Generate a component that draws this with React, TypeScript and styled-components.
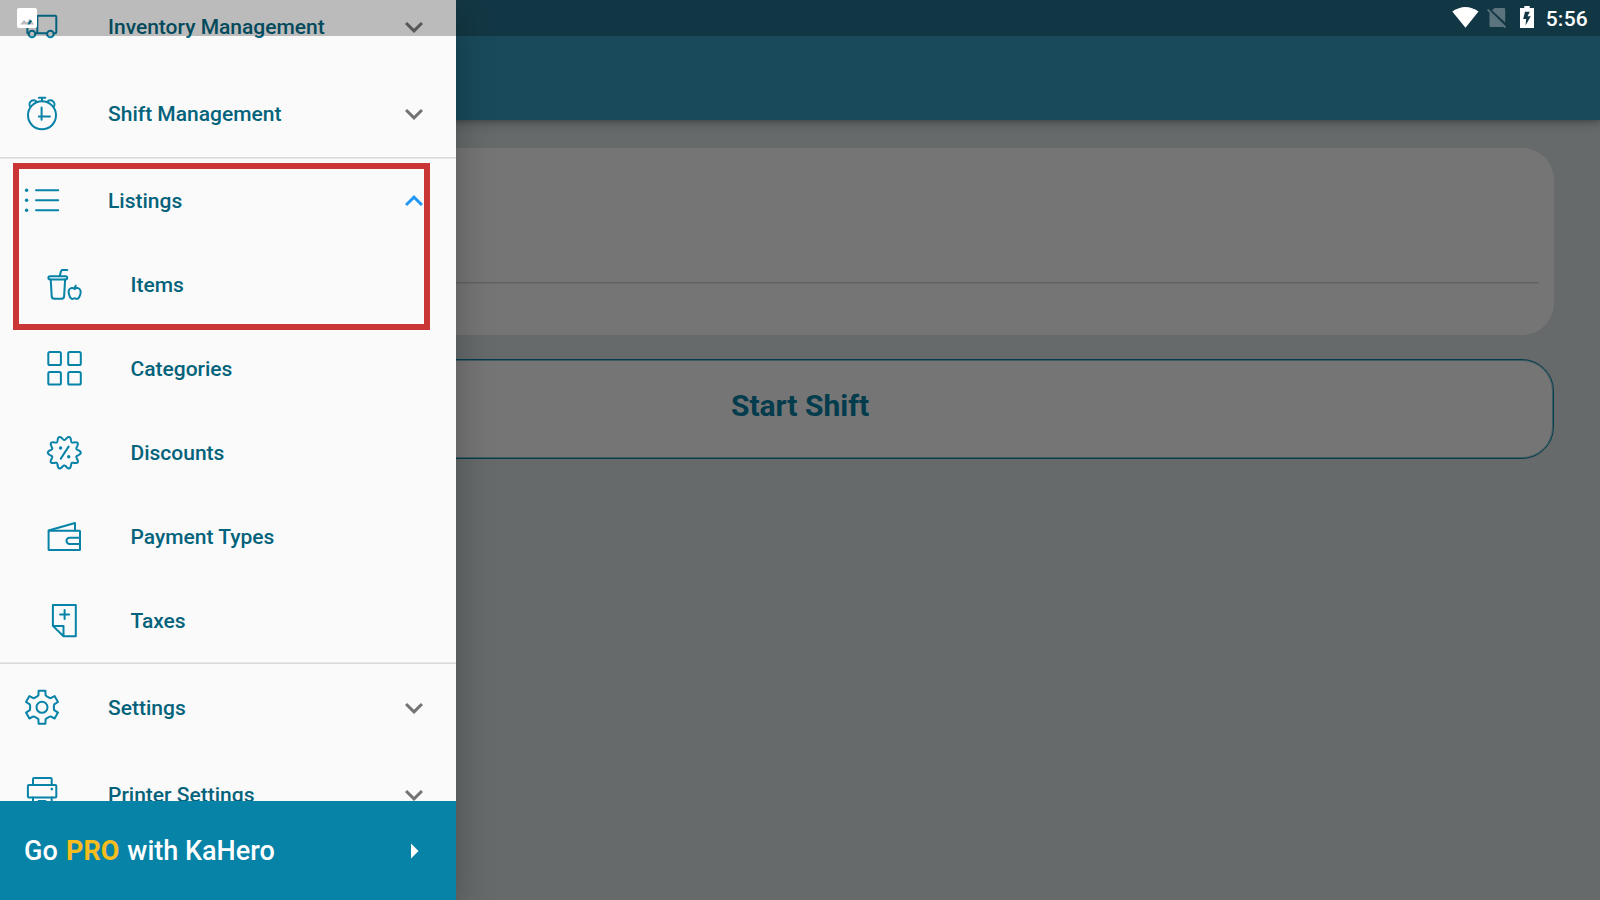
import React from 'react';
import styled, { createGlobalStyle } from 'styled-components';

const GlobalStyle = createGlobalStyle`
  * { box-sizing: border-box; }
  body { margin: 0; font-family: Roboto, sans-serif; }
`;

const Screen = styled.div`
  position: relative;
  width: 1600px;
  height: 900px;
  overflow: hidden;
  background: #dfe7e8;
`;

const Page = styled.div`
  display: flex;
  flex-direction: column;
  height: 100%;
`;

const AppBar = styled.header`
  flex: none;
  height: 120px;
  background: #38a1c6;
  box-shadow: 0 2px 5px rgba(0, 0, 0, 0.22), 0 3px 14px rgba(0, 0, 0, 0.18);
`;

const Content = styled.main`
  display: flex;
  flex-direction: column;
  gap: 24px;
  padding: 28px 46px;
`;

const Card = styled.section`
  height: 187px;
  padding: 134px 15px 0;
  border-radius: 32px;
  background: #fff;
`;

const CardRule = styled.div`
  height: 2px;
  border-top: 1px solid #d6d6d6;
  border-bottom: 1px solid #ebebeb;
`;

const StartButton = styled.button`
  height: 100px;
  padding: 0 0 6px;
  border: 1px solid #0783a8;
  border-radius: 32px;
  background: #fff;
  box-shadow: inset 0 0 0 1px rgba(7, 131, 168, 0.45);
  color: #0783a8;
  font: 700 30px/36px Roboto, sans-serif;
`;

const Scrim = styled.div`
  position: absolute;
  inset: 0;
  background: rgba(0, 0, 0, 0.54);
`;

const Drawer = styled.aside`
  position: absolute;
  inset: 0 auto 0 0;
  display: flex;
  flex-direction: column;
  width: 456px;
  background: #fafafa;
  box-shadow: 0 12px 36px rgba(0, 0, 0, 0.26);
`;

const Menu = styled.nav`
  flex: 1;
  min-height: 0;
  overflow: hidden;
`;

const MenuList = styled.div`
  margin-top: -15px;
`;

const Row = styled.div<{ $sub?: boolean }>`
  display: flex;
  align-items: center;
  height: 84px;
  padding: 0 24px 0 ${(p) => (p.$sub ? 46 : 24)}px;
`;

const Label = styled.span<{ $sub?: boolean }>`
  flex: 1;
  margin-left: ${(p) => (p.$sub ? 48.5 : 48)}px;
  color: #04637b;
  font-size: 21px;
  font-weight: 500;
  line-height: 30px;
`;

const Gap = styled.div`
  height: 3px;
`;

const Rule = styled.div<{ $flip?: boolean }>`
  height: 2px;
  margin: ${(p) => (p.$flip ? '-1px 0 2px' : '1px 0 0')};
  border-top: 1px solid ${(p) => (p.$flip ? '#e6e6e6' : '#dadada')};
  border-bottom: 1px solid ${(p) => (p.$flip ? '#dadada' : '#e6e6e6')};
`;

const Icon = styled.svg`
  flex: none;
  width: 36px;
  height: 36px;
  overflow: visible;
  fill: none;
  stroke: #0783a8;
  stroke-width: 2;
  stroke-linecap: round;
  stroke-linejoin: round;

  .solid {
    fill: #0783a8;
    stroke: none;
  }
`;

const Chevron = styled.svg<{ $open?: boolean }>`
  flex: none;
  width: 36px;
  height: 36px;
  fill: ${(p) => (p.$open ? '#2196f3' : '#737373')};
  transform: ${(p) => (p.$open ? 'rotate(180deg)' : 'none')};
`;

const ProBanner = styled.footer`
  flex: none;
  display: flex;
  align-items: center;
  justify-content: space-between;
  height: 99px;
  padding: 0 24px;
  background: #0783a8;
  color: #fff;
  font-size: 27px;
  font-weight: 500;
`;

const ProWord = styled.span`
  margin: 0 1.3px 0 1.6px;
  color: #f7bd1d;
  font-weight: 700;
`;

const ArrowRight = styled.svg`
  width: 36px;
  height: 36px;
  fill: #fff;
`;

const Highlight = styled.div`
  position: absolute;
  left: 13px;
  top: 163px;
  width: 417px;
  height: 167px;
  border: 6px solid #ca3636;
`;

const StatusBar = styled.div`
  position: absolute;
  inset: 0 0 auto 0;
  display: flex;
  align-items: flex-start;
  justify-content: space-between;
  height: 36px;
  padding: 0 12px 0 17px;
  background: rgba(0, 0, 0, 0.25);
`;

const StatusIcons = styled.div`
  display: flex;
  align-items: flex-start;
`;

const Glyph = styled.svg<{ $gap?: number }>`
  flex: none;
  margin-right: ${(p) => p.$gap ?? 0}px;
  fill: #fff;
`;

const Clock = styled.span`
  color: #fff;
  font-size: 21px;
  font-weight: 500;
  line-height: 38px;
  letter-spacing: 0.25px;
`;

const badgePath = (() => {
  const pts: string[] = [];
  for (let i = 0; i < 180; i++) {
    const a = (i * Math.PI) / 90;
    const r = 14.6 + 1.9 * Math.cos(10 * a);
    pts.push(`${(18.3 + r * Math.cos(a)).toFixed(2)} ${(17.7 + r * Math.sin(a)).toFixed(2)}`);
  }
  return `M${pts.join('L')}Z`;
})();

const gearPath = (() => {
  const tooth = [[-4.7, -11], [-3.6, -12], [-3.4, -16.5], [3.4, -16.5], [3.6, -12], [4.7, -11]];
  const pts: string[] = [];
  for (let k = 0; k < 6; k++) {
    const a = (k * Math.PI) / 3;
    tooth.forEach(([x, y]) => {
      pts.push(
        `${(18 + x * Math.cos(a) - y * Math.sin(a)).toFixed(2)} ${(17.3 + x * Math.sin(a) + y * Math.cos(a)).toFixed(2)}`
      );
    });
  }
  return `M${pts.join('L')}Z`;
})();

const icons = {
  truck: (
    <>
      <path d="M11.3 24.2h11.8M29.8 24.2h1.3q1.2 0 1.2-1.2V8q0-1.2-1.2-1.2H14.5q-1.2 0-1.2 1.2v16" />
      <path d="M4.8 24.2H3.4v-6.4L6.6 12h6.7" />
      <circle cx="8" cy="25" r="3.3" />
      <circle cx="26.4" cy="25" r="3.3" />
    </>
  ),
  clock: (
    <>
      <circle cx="18" cy="19.3" r="14" />
      <path d="M14.9 1.7h6.4M18 1.7V5M6.4 10.8A3.9 3.9 0 1 1 12.6 5.8M29.6 10.8A3.9 3.9 0 1 0 23.4 5.8M17.6 11.5v12.2M14.9 20.4h11" />
    </>
  ),
  list: (
    <>
      <path d="M12 7.3h22.2M12 17.3h22.2M12 27.2h22.2" />
      <circle className="solid" cx="2.6" cy="7.3" r="1.7" />
      <circle className="solid" cx="2.6" cy="17.3" r="1.7" />
      <circle className="solid" cx="2.6" cy="27.2" r="1.7" />
    </>
  ),
  items: (
    <>
      <rect x="2.4" y="9.2" width="18.8" height="3.2" rx="1.6" />
      <path d="M4.7 12.4l1 17q.2 2.4 2.4 2.4h7.6q2.2 0 2.4-2.4l1-17M13.8 8.8l1.2-4.6q.3-1.2 1.4-1.2h4.8" />
      <path d="M28.6 22q-1.6-1.3-3.4-.9c-2.4.6-3.1 3.2-2.3 6 .8 2.9 2 4.8 3.4 4.8.9 0 1.3-.6 2.3-.6s1.4.6 2.3.6c1.4 0 2.7-1.9 3.5-4.8.7-2.8 0-5.4-2.4-6q-1.8-.4-3.4.9zq0-2.2 1.2-3.4" />
    </>
  ),
  categories: (
    <>
      <rect x="2.3" y="1.1" width="12.6" height="13" rx="1.6" />
      <rect x="22.2" y="1.1" width="12.6" height="13" rx="1.6" />
      <rect x="2.3" y="21" width="12.6" height="12.6" rx="1.6" />
      <rect x="22.2" y="21" width="12.6" height="12.6" rx="1.6" />
    </>
  ),
  discounts: (
    <>
      <path d={badgePath} />
      <path d="M22.6 11.6l-7.8 12" />
      <circle className="solid" cx="14.6" cy="13" r="1.7" />
      <circle className="solid" cx="22.7" cy="21.8" r="1.7" />
    </>
  ),
  wallet: (
    <>
      <rect x="2.6" y="11.7" width="31.4" height="19.2" rx="0.5" />
      <path d="M2.6 11.5L29 4v7.5M34 18.7H23.6a3.1 3.1 0 0 0 0 6.3H34" />
    </>
  ),
  taxes: <path d="M6.9 2h22.9v31.2H17.5L6.9 22.9zM6.9 22.9h10.6v10.3M18.6 7v9M14.1 11.4h9" />,
  gear: (
    <>
      <path d={gearPath} />
      <circle cx="18" cy="17.3" r="5.5" />
    </>
  ),
  printer: (
    <>
      <path d="M9 7.8V1.9q0-1 1-1h16.7q1 0 1 1v5.9M9 20.5v11h18.7v-11M14.5 24h7" />
      <rect x="3.9" y="7.9" width="28.4" height="12.6" rx="1" />
      <circle className="solid" cx="27.8" cy="12.1" r="1.3" />
    </>
  ),
};

type RowProps = { icon: keyof typeof icons; label: string; open?: boolean; sub?: boolean };

const MenuRow = ({ icon, label, open, sub }: RowProps) => (
  <Row $sub={sub}>
    <Icon viewBox="0 0 36 36">{icons[icon]}</Icon>
    <Label $sub={sub}>{label}</Label>
    {!sub && (
      <Chevron $open={open} viewBox="0 0 24 24">
        <path d="M16.59 8.59L12 13.17 7.41 8.59 6 10l6 6 6-6z" />
      </Chevron>
    )}
  </Row>
);

export default function App() {
  return (
    <Screen>
      <GlobalStyle />
      <Page>
        <AppBar />
        <Content>
          <Card>
            <CardRule />
          </Card>
          <StartButton>Start Shift</StartButton>
        </Content>
      </Page>
      <Scrim />
      <Drawer>
        <Menu>
          <MenuList>
            <MenuRow icon="truck" label="Inventory Management" />
            <Gap />
            <MenuRow icon="clock" label="Shift Management" />
            <Rule />
            <MenuRow icon="list" label="Listings" open />
            <MenuRow icon="items" label="Items" sub />
            <MenuRow icon="categories" label="Categories" sub />
            <MenuRow icon="discounts" label="Discounts" sub />
            <MenuRow icon="wallet" label="Payment Types" sub />
            <MenuRow icon="taxes" label="Taxes" sub />
            <Rule $flip />
            <MenuRow icon="gear" label="Settings" />
            <Gap />
            <MenuRow icon="printer" label="Printer Settings" />
          </MenuList>
        </Menu>
        <ProBanner>
          <span>
            Go <ProWord>PRO</ProWord> with KaHero
          </span>
          <ArrowRight viewBox="0 0 24 24">
            <path d="M10 17l5-5-5-5z" />
          </ArrowRight>
        </ProBanner>
      </Drawer>
      <StatusBar>
        <Glyph width="20" height="28" viewBox="0 0 20 28">
          <path
            fillRule="evenodd"
            d="M2 8h16q2 0 2 2v16q0 2-2 2H2q-2 0-2-2V10q0-2 2-2zM3 24.5h14l-4-6-3.2 4L7 20z"
          />
        </Glyph>
        <StatusIcons>
          <Glyph width="27" height="36" viewBox="0 0 27 36" $gap={8.5}>
            <path d="M0.3 11.5Q13.5 2.5 26.5 11.5L13.5 27.7z" />
          </Glyph>
          <Glyph width="20" height="36" viewBox="0 0 20 36" $gap={13}>
            <g opacity="0.3">
              <path d="M7.6 8h9.4q1.2 0 1.2 1.2v13.4L4.9 10.3zM2.5 12.4L17.4 27H3.7q-1.2 0-1.2-1.2z" />
              <path d="M0 10.2l1.3-1.3L19.2 26.7l-1.4 1.5z" />
            </g>
          </Glyph>
          <Glyph width="14" height="36" viewBox="0 0 14 36" $gap={11.2}>
            <path
              fillRule="evenodd"
              d="M4.3 6h5.4v2H14v20H0V8h4.3zM5 11.8L3.2 19h3L5.5 25.5 10.8 16.2H7.5L9.8 11.8z"
            />
          </Glyph>
          <Clock>5:56</Clock>
        </StatusIcons>
      </StatusBar>
      <Highlight />
    </Screen>
  );
}
